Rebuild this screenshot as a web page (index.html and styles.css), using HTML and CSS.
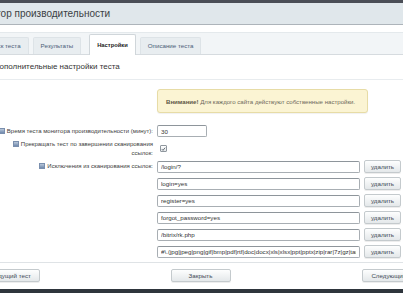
FILE: index.html
```html
<!DOCTYPE html>
<html lang="ru">
<head>
  <meta charset="UTF-8">
  <title>Монитор производительности</title>
  <link rel="stylesheet" href="styles.css">
</head>
<body>
  <div class="topline"></div>
  <div class="dialog">
    <div class="dialog-title">Монитор производительности</div>

    <div class="tabs">
      <span class="tab">Запуск теста</span>
      <span class="tab">Результаты</span>
      <span class="tab active">Настройки</span>
      <span class="tab">Описание теста</span>
    </div>

    <div class="dialog-body">
      <div class="heading">Дополнительные настройки теста</div>

      <div class="form">
        <div></div>
        <div class="notice"><b>Внимание!</b> Для каждого сайта действуют собственные настройки.</div>

        <label class="label"><span class="hint"></span>Время теста монитора производительности (минут):</label>
        <div><input class="field short" type="text" value="30"></div>

        <label class="label wrap"><span class="hint"></span>Прекращать тест по завершении сканирования ссылок:</label>
        <div class="check-cell">
          <span class="check">
            <svg width="6" height="6" viewBox="0 0 6 6"><path d="M1 3.2 L2.4 4.6 L5 1.4" fill="none" stroke="#4a5560" stroke-width="1"/></svg>
          </span>
        </div>

        <label class="label"><span class="hint"></span>Исключения из сканирования ссылок:</label>
        <div class="excl">
          <div class="excl-row"><input class="field" type="text" value="/login/?"><button class="btn small">удалить</button></div>
          <div class="excl-row"><input class="field" type="text" value="login=yes"><button class="btn small">удалить</button></div>
          <div class="excl-row"><input class="field" type="text" value="register=yes"><button class="btn small">удалить</button></div>
          <div class="excl-row"><input class="field" type="text" value="forgot_password=yes"><button class="btn small">удалить</button></div>
          <div class="excl-row"><input class="field" type="text" value="/bitrix/rk.php"><button class="btn small">удалить</button></div>
          <div class="excl-row"><input class="field" type="text" value="#\.(jpg|jpeg|png|gif|bmp|pdf|rtf|doc|docx|xls|xlsx|ppt|pptx|zip|rar|7z|gz|tar|tgz|bz2)$#i"><button class="btn small">удалить</button></div>
          <div class="excl-row"><button class="btn add">добавить</button></div>
        </div>
      </div>
    </div>

    <div class="dialog-footer">
      <button class="btn prev">Предыдущий тест</button>
      <button class="btn close">Закрыть</button>
      <button class="btn next">Следующий тест</button>
    </div>
  </div>
  <div class="bottomline"></div>
</body>
</html>
```

FILE: styles.css
```css
/* General */
body {
  margin: 0;
  width: 403px;
  height: 294px;
  overflow: hidden;
  background: #fff;
  font-family: "Liberation Sans", Arial, sans-serif;
  color: #333;
}

.topline {
  height: 3px;
  background: #4a4e56;
}

.bottomline {
  height: 4px;
  background: #2e353c;
}

.dialog {
  margin-left: -40px;
  width: 479px;
}

/* Title */
.dialog-title {
  height: 21px;
  line-height: 21px;
  padding-left: 11px;
  font-size: 10px;
  color: #3b3f44;
  background: #e0e7eb;
  border-bottom: 1px solid #adb4ba;
  margin-bottom: 7px;
}

/* Tabs */
.tabs {
  display: flex;
  align-items: flex-end;
  gap: 4px;
  height: 21px;
  padding-left: 16px;
  background: #f2f5f7;
  border-top: 1px solid #e4e9ec;
  border-bottom: 1px solid #d6dbdf;
}

.tab {
  box-sizing: border-box;
  height: 17px;
  line-height: 16px;
  padding: 0 7px;
  font-size: 6.2px;
  color: #4a6078;
  background: #e8edf0;
  border: 1px solid #dde3e7;
  border-bottom: none;
  border-radius: 2px 2px 0 0;
}

.tab.active {
  height: 21px;
  line-height: 20px;
  margin: 0 0 -1px 4px;
  font-size: 5.8px;
  font-weight: bold;
  color: #222;
  background: #fff;
  border-color: #d0d6da;
}

/* Body */
.dialog-body {
  height: 200px;
  padding-top: 7px;
  overflow: hidden;
}

.heading {
  padding: 0 0 7px 34px;
  font-size: 8px;
  line-height: 10px;
  color: #333;
  border-bottom: 1px solid #e8ecef;
  margin-bottom: 9px;
}

.form {
  display: grid;
  grid-template-columns: 163px auto;
  column-gap: 4px;
  row-gap: 2px;
  padding-left: 30px;
}

.notice {
  box-sizing: border-box;
  width: 211px;
  height: 24px;
  line-height: 23px;
  padding-left: 8px;
  margin-bottom: 10px;
  font-size: 6.1px;
  color: #6e6a5c;
  background: #fbf4d3;
  border: 1px solid #e7dca6;
  border-radius: 3px;
  box-shadow: 0 1px 1px rgba(0, 0, 0, 0.06);
}

.notice b {
  color: #5d5745;
}

.label {
  text-align: right;
  font-size: 6px;
  line-height: 12px;
  color: #3c3c3c;
}

.label.wrap {
  line-height: 9px;
  padding-top: 1px;
}

.hint {
  display: inline-block;
  width: 4px;
  height: 4px;
  margin-right: 2px;
  vertical-align: -1px;
  background: linear-gradient(#b9c8da, #7089ad);
  border: 1px solid #7a8fae;
}

.field {
  display: block;
  box-sizing: border-box;
  width: 203px;
  height: 12px;
  padding: 0 3px;
  margin: 0;
  font-family: inherit;
  font-size: 6.2px;
  color: #333;
  background: #fff;
  border: 1px solid #a8aeb3;
  border-top-color: #8e959b;
  border-radius: 2px;
}

.field.short {
  width: 50px;
}

.check-cell {
  display: flex;
  align-items: center;
  padding-left: 3px;
}

.check {
  box-sizing: border-box;
  width: 7px;
  height: 7px;
  display: flex;
  align-items: center;
  justify-content: center;
  border: 1px solid #8f979e;
  border-radius: 1px;
  background: linear-gradient(#fff, #e6e9eb);
}

.excl {
  display: flex;
  flex-direction: column;
  gap: 4px;
}

.excl-row {
  display: flex;
  align-items: center;
  gap: 4px;
  height: 13px;
}

/* Buttons */
.btn {
  box-sizing: border-box;
  margin: 0;
  padding: 0 8px;
  font-family: inherit;
  font-size: 6.2px;
  color: #3e4a55;
  background: linear-gradient(#fdfefe, #e4e8ea);
  border: 1px solid #c4cacd;
  border-radius: 2px;
  box-shadow: 0 1px 0 rgba(0, 0, 0, 0.07);
}

.btn.small {
  width: 37px;
  height: 13px;
  padding: 0;
}

.btn.add {
  width: 41px;
  height: 13px;
  margin-left: 2px;
}

.dialog-footer {
  display: grid;
  grid-template-columns: 1fr auto 1fr;
  padding: 6px 10px 7px;
  border-top: 1px solid #dfe3e6;
}

.dialog-footer .btn {
  height: 13px;
}

.prev {
  justify-self: start;
}

.close {
  min-width: 60px;
  margin-left: 2px;
}

.next {
  justify-self: end;
}
```
